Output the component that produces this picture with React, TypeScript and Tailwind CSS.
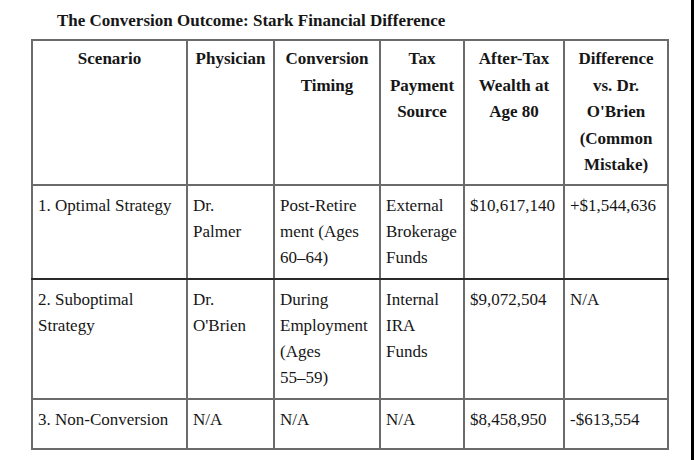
const headers = [
  ['Scenario'],
  ['Physician'],
  ['Conversion', 'Timing'],
  ['Tax', 'Payment', 'Source'],
  ['After-Tax', 'Wealth at', 'Age 80'],
  ['Difference', 'vs. Dr.', "O'Brien", '(Common', 'Mistake)'],
]

const rows = [
  {
    h: 'h-[94px]',
    border: 'border-b-[#2a2a2a]',
    cells: [
      ['1. Optimal Strategy'],
      ['Dr.', 'Palmer'],
      ['Post-Retire', 'ment (Ages', '60–64)'],
      ['External', 'Brokerage', 'Funds'],
      ['$10,617,140'],
      ['+$1,544,636'],
    ],
  },
  {
    h: 'h-[120px]',
    border: 'border-b-[#6b6b6b]',
    cells: [
      ['2. Suboptimal', 'Strategy'],
      ['Dr.', "O'Brien"],
      ['During', 'Employment', '(Ages', '55–59)'],
      ['Internal', 'IRA', 'Funds'],
      ['$9,072,504'],
      ['N/A'],
    ],
  },
  {
    h: 'h-[50px]',
    border: 'border-b-[#6b6b6b]',
    cells: [['3. Non-Conversion'], ['N/A'], ['N/A'], ['N/A'], ['$8,458,950'], ['-$613,554']],
  },
]

const widths = ['w-[155px]', 'w-[87px]', 'w-[106px]', 'w-[84px]', 'w-[100px]', 'w-[104px]']

function Lines({ lines }: { lines: string[] }) {
  return (
    <>
      {lines.map((l, i) => (
        <div key={i} className="whitespace-nowrap">{l}</div>
      ))}
    </>
  )
}

export default function App() {
  return (
    <div className="w-[695px] h-[460px] bg-white flex text-[#161616] font-['Liberation_Serif',serif]">
      <div className="flex-1 flex flex-col pl-[31px] pt-[10px]">
        <h1 className="text-[17px] leading-[22px] font-bold pl-[26px] mb-[7px]">
          The Conversion Outcome: Stark Financial Difference
        </h1>
        <table className="border-collapse w-[636px] table-fixed text-[17px] leading-[26px]">
          <colgroup>
            {widths.map((w, i) => (
              <col key={i} className={w} />
            ))}
          </colgroup>
          <thead>
            <tr className="h-[145px]">
              {headers.map((h, i) => (
                <th
                  key={i}
                  className="border-2 border-[#6b6b6b] align-top text-center font-bold px-[3px] pt-[5px] leading-[26.5px]"
                >
                  <Lines lines={h} />
                </th>
              ))}
            </tr>
          </thead>
          <tbody>
            {rows.map((r, ri) => (
              <tr key={ri} className={r.h}>
                {r.cells.map((c, ci) => (
                  <td
                    key={ci}
                    className={`border-2 border-[#6b6b6b] ${r.border} align-top text-left px-[5px] pt-[7px]`}
                  >
                    <Lines lines={c} />
                  </td>
                ))}
              </tr>
            ))}
          </tbody>
        </table>
      </div>
      <div className="w-[3px] bg-black mr-[1px]" />
    </div>
  )
}
